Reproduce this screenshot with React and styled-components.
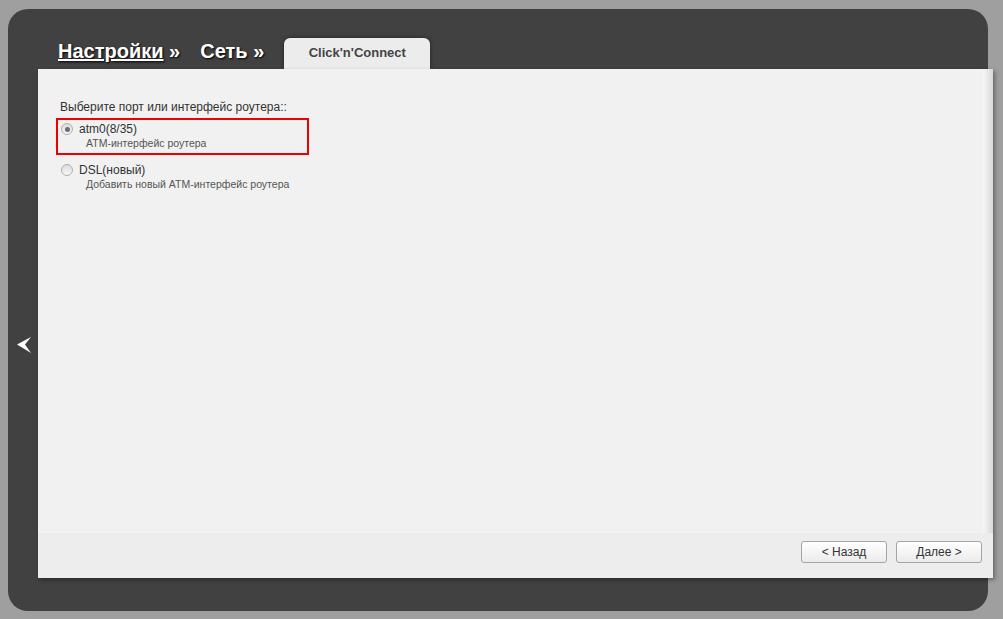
import React, { useState } from 'react';
import styled, { createGlobalStyle } from 'styled-components';

const GlobalStyle = createGlobalStyle`
  html, body {
    margin     : 0;
    padding    : 0;
    background : #9f9f9f;
    font-family: "Liberation Sans", Arial, sans-serif;
  }
`;

const Page = styled.div`
  display : flex;
  padding : 9px 15px 8px 8px;
  height  : 602px;
`;

const Frame = styled.div`
  position       : relative;
  display        : flex;
  flex-direction : column;
  width          : 980px;
  height         : 602px;
  background     : #414141;
  border-radius  : 20px;
  padding        : 29px 0 0 30px;
  box-sizing     : border-box;
`;

const SideArrow = styled.button`
  position   : absolute;
  left       : 8px;
  top        : 327px;
  border     : 0;
  padding    : 0;
  background : transparent;
  cursor     : pointer;
`;

const HeaderRow = styled.div`
  display     : flex;
  align-items : flex-end;
  height      : 31px;
  padding-left: 20px;
`;

const Crumb = styled.a`
  color          : #fff;
  font-size      : 20px;
  font-weight    : bold;
  text-shadow    : 1px 1px 2px #000;
  margin-right   : 20px;
  padding-bottom : 6px;
  text-decoration: none;
  white-space    : nowrap;

  span {
    text-decoration : ${p => (p.$link ? 'underline' : 'none')};
  }
`;

const Tab = styled.div`
  width          : 146px;
  height         : 31px;
  background     : #ececec;
  border-radius  : 6px 6px 0 0;
  box-shadow     : 0 0 4px rgba(0,0,0,0.5);
  color          : #444;
  font-size      : 13px;
  font-weight    : bold;
  text-align     : center;
  line-height    : 30px;
`;

const Panel = styled.div`
  display        : flex;
  flex-direction : column;
  width          : 955px;
  height         : 509px;
  background     : #ededed;
  box-shadow     : 2px 2px 4px rgba(0,0,0,0.35);
  position       : relative;
  z-index        : 1;
`;

const ScrollArea = styled.div`
  display : flex;
  height  : 464px;
`;

const Content = styled.div`
  flex       : 1;
  background : #f1f1f1;
  padding    : 31px 0 0 22px;
  color      : #333;
`;

const ScrollStrip = styled.div`
  width      : 10px;
  background : linear-gradient(to right, #f6f6f6, #d8d8d8);
`;

const Prompt = styled.div`
  font-size     : 12px;
  color         : #333;
  margin-bottom : 4px;
`;

const Option = styled.label`
  display       : flex;
  align-items   : flex-start;
  width         : 246px;
  margin-left   : -4px;
  padding       : 2px 0 3px 3px;
  border        : 2px solid ${p => (p.$selected ? '#ee0000' : 'transparent')};
  margin-bottom : 4px;
  cursor        : pointer;
`;

const Radio = styled.span`
  width          : 12px;
  height         : 12px;
  border-radius  : 50%;
  border         : 1px solid #b0b0b0;
  background     : linear-gradient(#dcdcdc, #f7f7f7);
  box-sizing     : border-box;
  margin-top     : 1px;
  display        : flex;
  align-items    : center;
  justify-content: center;
  flex-shrink    : 0;

  &::after {
    content       : '';
    width         : 5px;
    height        : 5px;
    border-radius : 50%;
    background    : ${p => (p.$checked ? '#6e6e6e' : 'transparent')};
  }
`;

const OptionText = styled.div`
  margin-left : 6px;
`;

const OptionTitle = styled.div`
  font-size   : 12px;
  color       : #333;
  line-height : 15px;
`;

const OptionNote = styled.div`
  font-size   : 10.5px;
  color       : #555;
  margin-left : 7px;
  line-height : 13px;
`;

const Footer = styled.div`
  display         : flex;
  justify-content : flex-end;
  gap             : 9px;
  padding         : 8px 11px 0 0;
`;

const Button = styled.button`
  width         : 86px;
  height        : 22px;
  border        : 1px solid #a5a5a5;
  border-radius : 3px;
  background    : linear-gradient(#ffffff, #ebebeb);
  font-family   : "Liberation Sans", Arial, sans-serif;
  font-size     : 12px;
  color         : #333;
  padding       : 0;
  cursor        : pointer;
`;

const options = [
  { id : 'atm0', title : 'atm0(8/35)', note : 'ATM-интерфейс роутера' },
  { id : 'dsl',  title : 'DSL(новый)', note : 'Добавить новый ATM-интерфейс роутера' },
];

export default function App() {
  const [selected, setSelected] = useState('atm0');

  return (
    <>
      <GlobalStyle />
      <Page>
        <Frame>
          <SideArrow aria-label="back">
            <svg width="16" height="18" viewBox="0 0 16 18">
              <path d="M1 8.5 L15 1 L9 8.5 L15 17 Z" fill="#fff" />
            </svg>
          </SideArrow>
          <HeaderRow>
            <Crumb $link href="#"><span>Настройки</span> »</Crumb>
            <Crumb>Сеть »</Crumb>
            <Tab>Click'n'Connect</Tab>
          </HeaderRow>
          <Panel>
            <ScrollArea>
              <Content>
                <Prompt>Выберите порт или интерфейс роутера::</Prompt>
                {options.map(o => (
                  <Option
                    key={o.id}
                    $selected={selected === o.id && o.id === 'atm0'}
                    onClick={() => setSelected(o.id)}
                  >
                    <Radio $checked={selected === o.id} />
                    <OptionText>
                      <OptionTitle>{o.title}</OptionTitle>
                      <OptionNote>{o.note}</OptionNote>
                    </OptionText>
                  </Option>
                ))}
              </Content>
              <ScrollStrip />
            </ScrollArea>
            <Footer>
              <Button>&lt; Назад</Button>
              <Button>Далее &gt;</Button>
            </Footer>
          </Panel>
        </Frame>
      </Page>
    </>
  );
}
